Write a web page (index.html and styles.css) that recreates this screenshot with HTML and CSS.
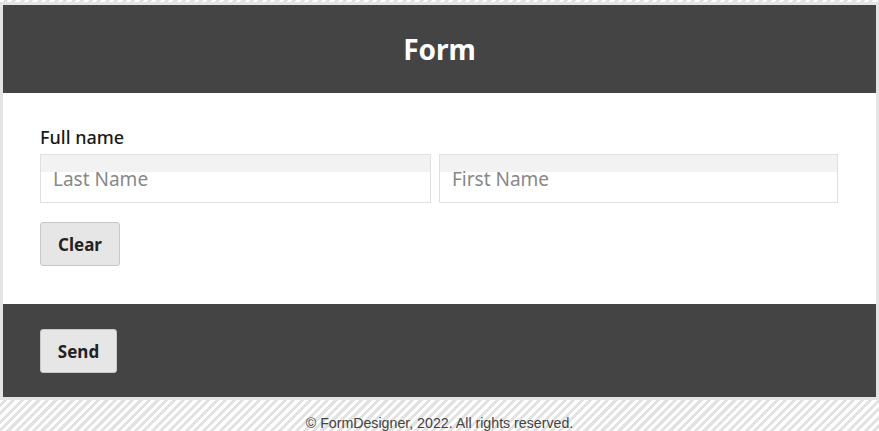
FILE: index.html
```html
<!DOCTYPE html>
<html lang="en">
<head>
<meta charset="utf-8">
<title>Form</title>
<link rel="stylesheet" href="styles.css">
</head>
<body>
<div class="page">
  <header class="header"><h1 class="title">Form</h1></header>
  <main class="content">
    <label class="label">Full name</label>
    <div class="name-row">
      <input class="field" type="text" placeholder="Last Name">
      <input class="field" type="text" placeholder="First Name">
    </div>
    <button class="btn clear" type="button">Clear</button>
  </main>
  <footer class="footer">
    <button class="btn send" type="button">Send</button>
  </footer>
</div>
<p class="copyright">© FormDesigner, 2022. All rights reserved.</p>
</body>
</html>
```
FILE: styles.css
```css
html, body {
  margin: 0;
  padding: 0;
}
body {
  background: repeating-linear-gradient(135deg, #ffffff 0 3px, #e2e2e2 3px 6px);
  font-family: "Trebuchet MS", "Noto Sans", sans-serif;
  height: 431px;
  overflow: hidden;
}
.page {
  margin-top: 2px;
  border: 3px solid #e4e4e4;
  background: #fff;
}
.header {
  background: #444444;
  height: 88px;
  display: flex;
  align-items: center;
  justify-content: center;
}
.title {
  margin: 0;
  color: #fff;
  font-size: 28px;
  font-weight: bold;
}
.content {
  padding: 33px 38px 38px 37px;
  display: flex;
  flex-direction: column;
  align-items: flex-start;
}
.label {
  font-size: 18px;
  line-height: 22px;
  font-weight: 500;
  color: #1a1a1a;
  margin-bottom: 6px;
}
.name-row {
  display: grid;
  grid-template-columns: 391px 1fr;
  gap: 8px;
  width: 100%;
}
.field {
  box-sizing: border-box;
  height: 49px;
  border: 1px solid #e0e0e0;
  background: linear-gradient(#f2f2f2 0 17px, #ffffff 17px);
  padding: 0 12px;
  font-family: inherit;
  font-size: 19px;
  color: #222;
  outline: none;
  margin: 0;
  width: 100%;
}
.field::placeholder {
  color: #888;
}
.btn {
  box-sizing: border-box;
  height: 44px;
  background: #e6e6e6;
  border: 1px solid #c8c8c8;
  border-radius: 3px;
  font-family: inherit;
  font-size: 17px;
  font-weight: bold;
  color: #222;
  padding: 0 16px;
  cursor: pointer;
}
.clear {
  margin-top: 19px;
  width: 80px;
}
.footer {
  background: #444444;
  height: 93px;
  box-sizing: border-box;
  padding: 25px 37px 0;
}
.send {
  width: 77px;
}
.copyright {
  margin: 15px 0 0;
  text-align: center;
  font-family: "Liberation Sans", Arial, sans-serif;
  font-size: 14.2px;
  color: #444;
}
```
